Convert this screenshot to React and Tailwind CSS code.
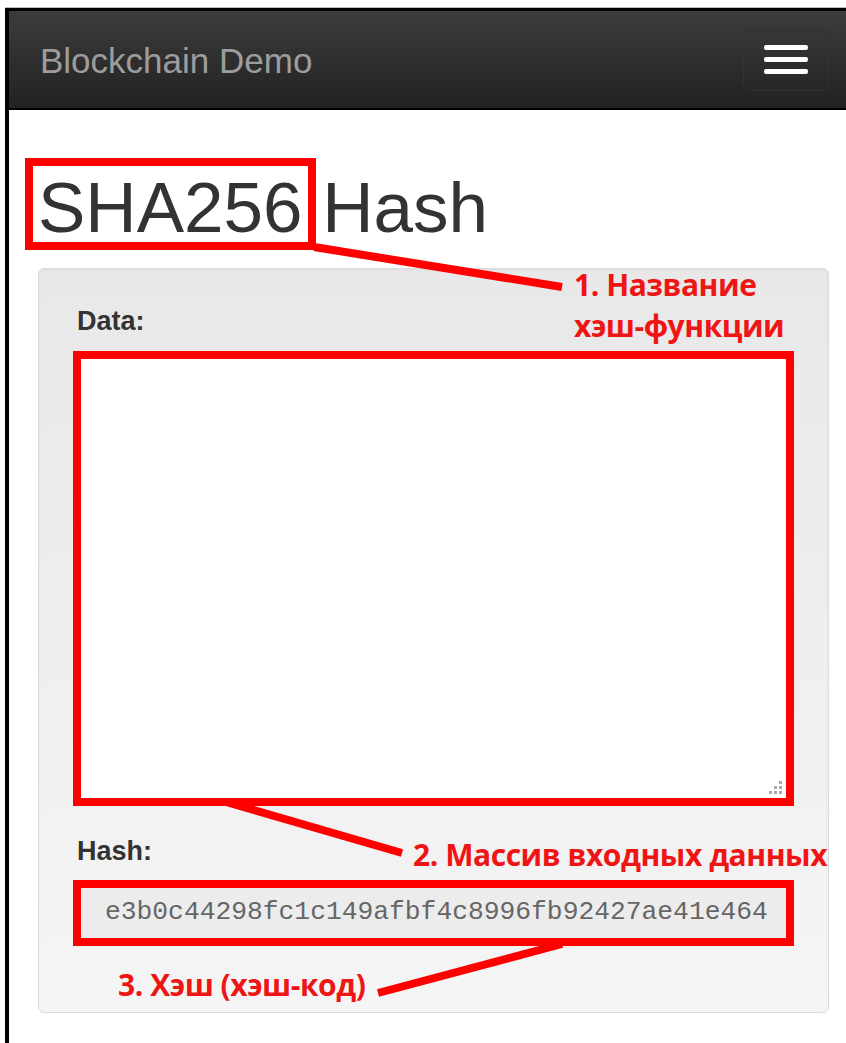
import React from "react";

const emptyHash = "e3b0c44298fc1c149afbf4c8996fb92427ae41e464";

function Navbar() {
  return (
    <nav className="flex h-[99px] items-center justify-between border-b-2 border-black bg-linear-to-b from-[#3c3c3c] to-[#222] pl-[31px] pr-[17px]">
      <span className="pt-[2px] text-[35px] leading-none text-[#9d9d9d]">Blockchain Demo</span>
      <button className="flex h-[62px] w-[86px] flex-col items-center justify-center gap-[7px] rounded-[8px] border border-[#333]">
        <span className="h-[5px] w-[44px] rounded-[2px] bg-white" />
        <span className="h-[5px] w-[44px] rounded-[2px] bg-white" />
        <span className="h-[5px] w-[44px] rounded-[2px] bg-white" />
      </button>
    </nav>
  );
}

// little dotted resize handle in the textarea corner
function Grip() {
  const dots = [
    [10, 0],
    [10, 5],
    [5, 5],
    [10, 10],
    [5, 10],
    [0, 10],
  ];
  return (
    <svg className="absolute bottom-[12px] right-[12px]" width="13" height="13">
      {dots.map(([x, y], i) => (
        <rect key={i} x={x} y={y} width="3" height="3" fill="#aaa" />
      ))}
    </svg>
  );
}

function Annotations() {
  return (
    <div className="pointer-events-none absolute inset-0 font-['Open_Sans',sans-serif] text-[30px] font-bold leading-[41px] tracking-[-0.015em] text-[#ef1515]">
      <svg className="absolute left-0 top-0" width="846" height="1043">
        <g stroke="#ff0000" strokeWidth="8" fill="none">
          <line x1="314" y1="247" x2="562" y2="287" />
          <line x1="226" y1="802" x2="402" y2="853" />
          <line x1="562" y1="944" x2="378" y2="993" />
        </g>
      </svg>
      <div className="absolute left-[574px] top-[264px]">
        1. Название
        <br />
        хэш-функции
      </div>
      <div className="absolute left-[413px] top-[834px] whitespace-nowrap">2. Массив входных данных</div>
      <div className="absolute left-[118px] top-[964px] whitespace-nowrap">3. Хэш (хэш-код)</div>
    </div>
  );
}

export default function App() {
  return (
    <div className="relative min-h-screen bg-white pl-[5px] pt-[7px] font-['Liberation_Sans',Arial,sans-serif]">
      <div className="h-px bg-[#bdbdbd]" />
      <div className="min-h-[1035px] border-l-4 border-t-[3px] border-black">
        <Navbar />

        <main className="pl-[29px] pr-[17px]">
          <h1 className="mt-[59px] text-[71px] font-normal leading-[77px] text-[#333]">
            <span className="relative inline-block">
              SHA256
              <span className="absolute -bottom-[4px] -left-[13px] -right-[14px] -top-[11px] border-[8px] border-[#ff0000]" />
            </span>{" "}
            Hash
          </h1>

          <div className="mt-[22px] rounded-[6px] border border-[#dcdcdc] bg-linear-to-b from-[#e8e8e8] to-[#f5f5f5] px-[34px] pb-[66px] pt-[34px] shadow-[inset_0_1px_3px_rgba(0,0,0,0.05)]">
            <label className="block pl-[4px] text-[27px] font-bold leading-[37px] text-[#333]">Data:</label>
            <div className="relative mt-[11px]">
              <textarea className="block h-[455px] w-full resize-none border-[8px] border-[#ff0000] bg-white outline-none" />
              <Grip />
            </div>

            <label className="mt-[27px] block pl-[4px] text-[27px] font-bold leading-[37px] text-[#333]">Hash:</label>
            <div className="mt-[10px] flex h-[66px] items-center border-[8px] border-[#ff0000] bg-[#ececec] pl-[24px] font-['Liberation_Mono',monospace] text-[26.3px] text-[#666]">
              {emptyHash}
            </div>
          </div>
        </main>
      </div>

      <Annotations />
    </div>
  );
}
